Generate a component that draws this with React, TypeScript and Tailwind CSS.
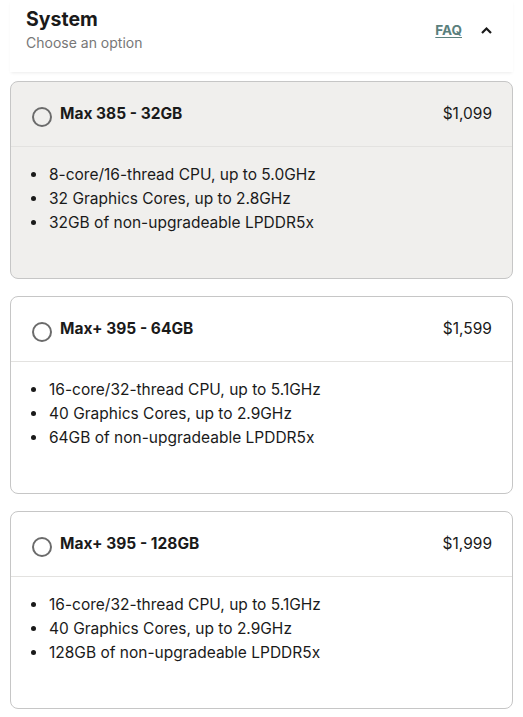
import React from "react";

const options = [
  {
    name: "Max 385 - 32GB",
    price: "$1,099",
    selected: true,
    specs: ["8-core/16-thread CPU, up to 5.0GHz", "32 Graphics Cores, up to 2.8GHz", "32GB of non-upgradeable LPDDR5x"],
  },
  {
    name: "Max+ 395 - 64GB",
    price: "$1,599",
    selected: false,
    specs: ["16-core/32-thread CPU, up to 5.1GHz", "40 Graphics Cores, up to 2.9GHz", "64GB of non-upgradeable LPDDR5x"],
  },
  {
    name: "Max+ 395 - 128GB",
    price: "$1,999",
    selected: false,
    specs: ["16-core/32-thread CPU, up to 5.1GHz", "40 Graphics Cores, up to 2.9GHz", "128GB of non-upgradeable LPDDR5x"],
  },
];

export default function App() {
  return (
    <div className="w-[523px] min-h-[717px] bg-white text-[#1a1a1a]" style={{ fontFamily: "Inter, 'Noto Sans', sans-serif" }}>
      <div className="mx-[10px] h-[72px] flex items-start justify-between pl-4 pr-4 pt-[6px] shadow-[0_2px_3px_-1px_rgba(0,0,0,0.08)]">
        <div>
          <div className="text-[19.5px] font-bold leading-[26px] text-[#1a1a1a]">System</div>
          <div className="text-[14px] leading-[20px] text-[#777] mt-[1px]">Choose an option</div>
        </div>
        <div className="flex items-center gap-[18px] pt-[14px]">
          <span className="text-[13.5px] font-bold text-[#5a807d] underline underline-offset-2">FAQ</span>
          <svg width="13" height="9" viewBox="0 0 13 9" className="mr-[4px]">
            <path d="M2 7 L6.5 2.5 L11 7" stroke="#1a1a1a" strokeWidth="2.2" fill="none" />
          </svg>
        </div>
      </div>
      <div className="flex flex-col gap-[17px] px-[10px] pt-[9px]">
        {options.map((o) => (
          <div
            key={o.name}
            className={`rounded-[8px] border border-[#c6c6c6] ${o.selected ? "bg-[#f0efed]" : "bg-white"}`}
          >
            <div className="h-[65px] flex items-center justify-between pl-[21px] pr-[20px] border-b border-[#e3e2e0]">
              <div className="flex items-center gap-[8px]">
                <span className="w-[20px] h-[20px] rounded-full border-2 border-[#6b6b6b] bg-transparent mt-[5px]" />
                <span className="text-[15.5px] font-bold">{o.name}</span>
              </div>
              <span className="text-[15.5px]">{o.price}</span>
            </div>
            <ul className="pt-[16px] pb-[43px] pl-[37px] list-disc marker:text-[#1a1a1a]">
              {o.specs.map((s) => (
                <li key={s} className="text-[15.5px] leading-[24px] pl-[1px]">
                  {s}
                </li>
              ))}
            </ul>
          </div>
        ))}
      </div>
    </div>
  );
}
